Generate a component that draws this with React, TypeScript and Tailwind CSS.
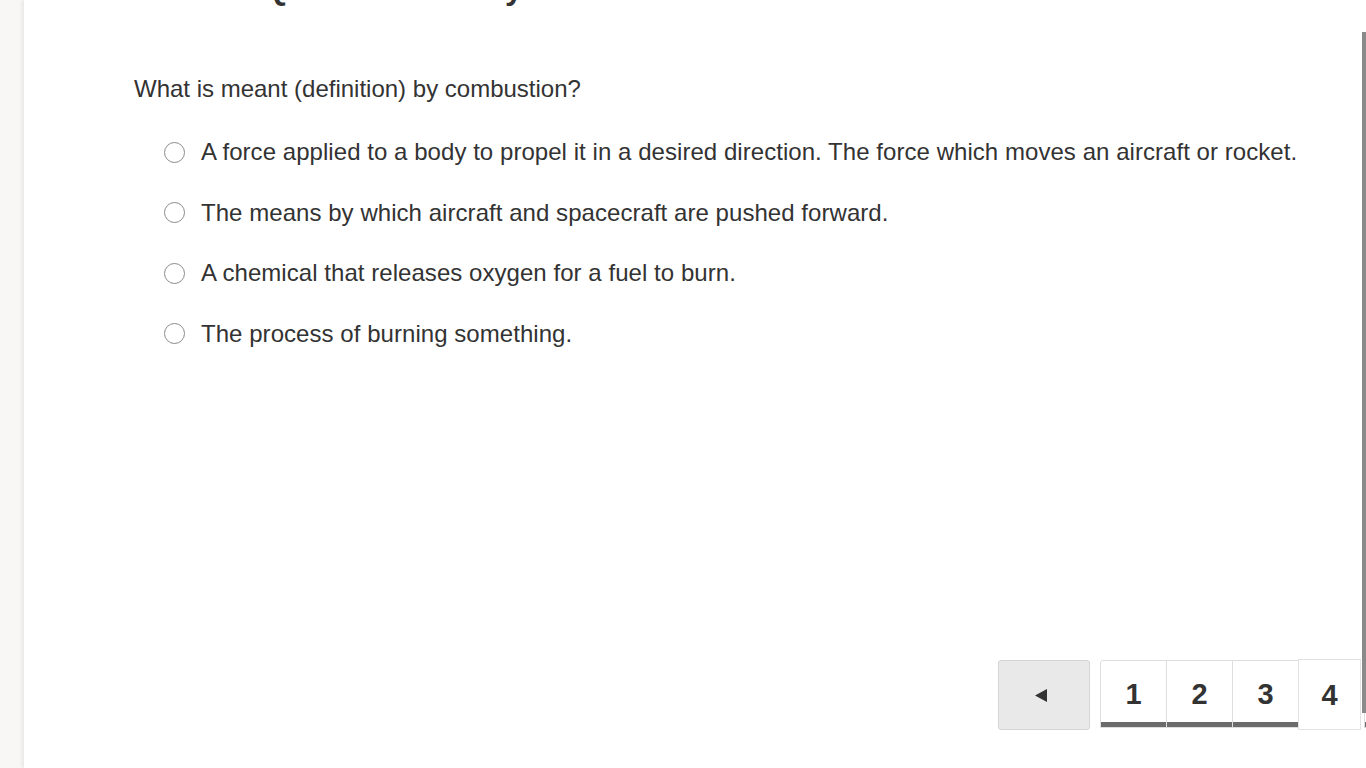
const options = [
  "A force applied to a body to propel it in a desired direction. The force which moves an aircraft or rocket.",
  "The means by which aircraft and spacecraft are pushed forward.",
  "A chemical that releases oxygen for a fuel to burn.",
  "The process of burning something.",
];

const answered = [1, 2, 3];

export default function App() {
  return (
    <div className="flex h-[768px] overflow-hidden bg-[#f8f7f5] font-['Liberation_Sans',Arial,sans-serif] text-[#333]">
      <div className="w-6 shrink-0" />
      <main className="relative flex flex-1 flex-col overflow-hidden bg-white pl-[110px] shadow-[-2px_0_4px_rgba(0,0,0,0.07)]">
        <h1 className="mt-[-32px] text-[32px] font-bold leading-[40px] whitespace-nowrap">
          Science Quiz: Vocabulary
        </h1>

        <p className="mt-[65px] text-[24px] leading-[32px]">
          What is meant (definition) by combustion?
        </p>

        <div className="mt-[31px] flex flex-col gap-[28.67px] pl-[30px]">
          {options.map((o) => (
            <label key={o} className="flex items-center gap-4 text-[24px] leading-[32px] tracking-[0.05px] whitespace-nowrap">
              <span className="h-[21px] w-[21px] shrink-0 rounded-full border-[1.5px] border-[#8a8a8a] bg-white" />
              {o}
            </label>
          ))}
        </div>

        <div className="mt-auto mb-[38px] ml-[864px] flex items-end">
          <button className="flex h-[70px] w-[92px] shrink-0 items-center justify-center rounded-[3px] border border-[#d4d4d4] bg-[#e9e9e9] pr-[6px]">
            <svg width="12" height="13" viewBox="0 0 12 13">
              <path d="M0 6.5 L12 0 L12 13 Z" fill="#333" />
            </svg>
          </button>
          <div className="ml-[10px] flex shrink-0 items-end">
            {answered.map((n) => (
              <button
                key={n}
                className="mb-[2px] -mr-px flex h-[68px] w-[67px] shrink-0 items-center justify-center border border-[#dedede] bg-white pt-[2px] text-[29px] font-bold text-[#333] shadow-[inset_0_-5px_0_#6b6b6b] first:rounded-tl-[3px]"
              >
                {n}
              </button>
            ))}
            <button className="flex h-[71px] w-[63px] shrink-0 items-center justify-center border border-[#e2e2e2] bg-white pt-[2px] text-[29px] font-bold text-[#333]">
              4
            </button>
            <div className="mb-[2px] ml-[3px] h-[68px] w-[66px] shrink-0 border border-[#dedede] bg-white shadow-[inset_0_-5px_0_#6b6b6b]" />
          </div>
        </div>

        <div className="absolute top-[32px] right-0 h-[681px] w-[4px] bg-[#8a8a8a]" />
      </main>
    </div>
  );
}
